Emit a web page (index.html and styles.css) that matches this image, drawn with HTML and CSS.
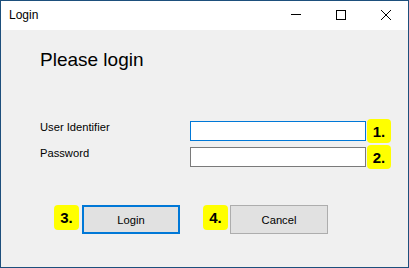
FILE: index.html
```html
<!DOCTYPE html>
<html lang="en">
<head>
    <meta charset="UTF-8">
    <meta name="viewport" content="width=device-width, initial-scale=1.0">
    <title>Login</title>
    <link rel="stylesheet" href="styles.css">
</head>
<body>
    <div class="window">
        <!-- Barra de título -->
        <div class="titlebar">
            <span class="title">Login</span>
            <div class="controls">
                <span class="ctrl">
                    <svg width="12" height="12" viewBox="0 0 12 12"><path d="M1 5.5h10" stroke="#000" stroke-width="1"/></svg>
                </span>
                <span class="ctrl">
                    <svg width="12" height="12" viewBox="0 0 12 12"><rect x="1.5" y="1.5" width="9" height="9" fill="none" stroke="#000" stroke-width="1"/></svg>
                </span>
                <span class="ctrl">
                    <svg width="12" height="12" viewBox="0 0 12 12"><path d="M1 1l10 10M11 1L1 11" stroke="#000" stroke-width="1"/></svg>
                </span>
            </div>
        </div>

        <div class="content">
            <h2>Please login</h2>

            <form class="fields" onsubmit="event.preventDefault()">
                <label for="user">User Identifier</label>
                <input type="text" id="user" class="focused">
                <span class="badge">1.</span>

                <label for="password">Password</label>
                <input type="password" id="password">
                <span class="badge">2.</span>
            </form>

            <div class="actions">
                <span class="badge">3.</span>
                <button class="btn default">Login</button>
                <span class="badge second">4.</span>
                <button class="btn">Cancel</button>
            </div>
        </div>
    </div>
</body>
</html>
```

FILE: styles.css
```css
* {
    box-sizing: border-box;
    margin: 0;
    padding: 0;
}

body {
    font-family: 'Liberation Sans', Arial, sans-serif;
    background: #f0f0f0;
    width: 409px;
    height: 268px;
}

.window {
    width: 409px;
    height: 268px;
    border: 1px solid #1d4f7c;
    background: #f0f0f0;
    display: flex;
    flex-direction: column;
}

.titlebar {
    height: 29px;
    background: #fff;
    display: flex;
    align-items: center;
    justify-content: space-between;
}

.title {
    font-size: 12px;
    color: #000;
    padding-left: 8px;
    padding-bottom: 1px;
}

.controls {
    display: flex;
    height: 100%;
}

.ctrl {
    width: 45px;
    height: 100%;
    display: flex;
    align-items: center;
    justify-content: center;
    padding-bottom: 1px;
}

.ctrl svg {
    display: block;
}

.content {
    flex: 1;
    padding: 18px 0 0 39px;
}

h2 {
    font-size: 19px;
    font-weight: normal;
    line-height: 24px;
    color: #000;
}

.fields {
    display: grid;
    grid-template-columns: 149px 176px 24px;
    grid-auto-rows: 24px;
    row-gap: 2px;
    column-gap: 1px;
    margin-top: 47px;
}

label {
    font-size: 11.2px;
    color: #000;
    padding-top: 2px;
    line-height: 13px;
}

input {
    align-self: center;
    height: 20px;
    border: 1px solid #7a7a7a;
    background: #fff;
    outline: none;
    font-size: 11px;
}

input.focused {
    border-color: #0078d7;
}

.badge {
    width: 24px;
    height: 24px;
    background: #ffff00;
    border-radius: 4px;
    font-size: 15px;
    font-weight: bold;
    color: #000;
    display: flex;
    align-items: center;
    justify-content: center;
}

.actions {
    display: flex;
    align-items: flex-start;
    margin-top: 36px;
    margin-left: 14px;
}

.actions .badge {
    height: 25px;
    width: 25px;
    margin-right: 3px;
}

.actions .badge.second {
    margin-left: 23px;
    margin-right: 2px;
}

.btn {
    width: 98px;
    height: 29px;
    background: #e1e1e1;
    border: 1px solid #adadad;
    font-family: 'Liberation Sans', Arial, sans-serif;
    font-size: 11.2px;
    color: #000;
}

.btn.default {
    border: 2px solid #0078d7;
}
```
